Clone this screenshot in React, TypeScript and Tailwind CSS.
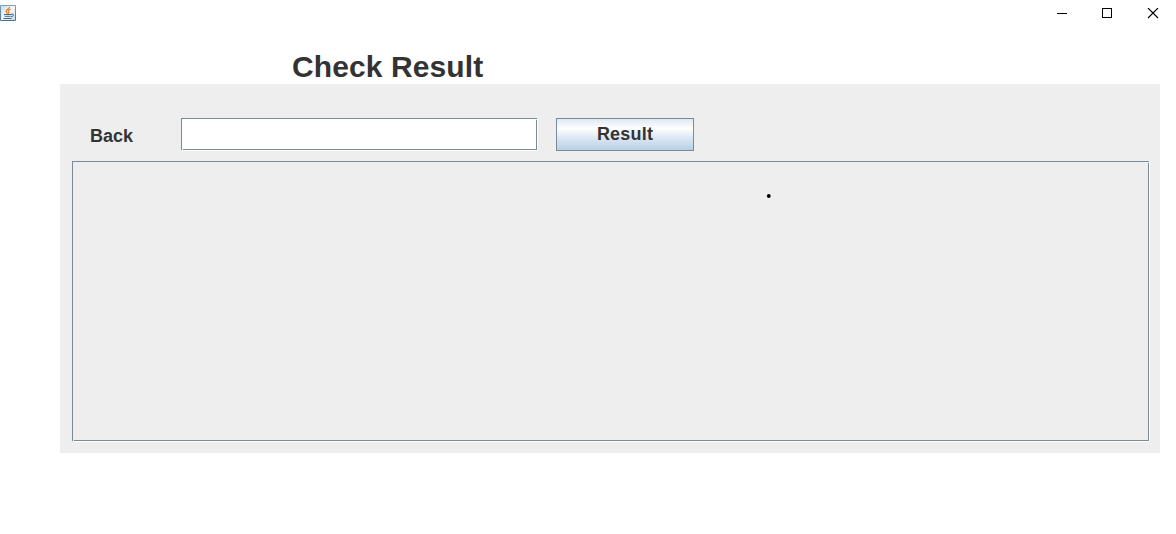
import type { ReactNode } from "react";

function Flush({ className, children }: { className: string; children?: ReactNode }) {
  return (
    <div className={`relative pr-px pb-px ${className}`}>
      <div className="h-full w-full border border-[#7a8a99]">{children}</div>
      <span className="absolute right-0 bottom-0 left-px h-px bg-white" />
      <span className="absolute top-px right-0 bottom-0 w-px bg-white" />
      <span className="absolute bottom-px left-px h-px w-px bg-[#eeeeee]" />
      <span className="absolute top-px right-px h-px w-px bg-[#eeeeee]" />
    </div>
  );
}

function JavaIcon() {
  return (
    <svg width="16" height="16" viewBox="0 0 16 16">
      <defs>
        <linearGradient id="tile" x1="0" y1="0" x2="0" y2="1">
          <stop offset="0" stopColor="#7fa1ba" />
          <stop offset="1" stopColor="#46718f" />
        </linearGradient>
        <linearGradient id="face" x1="0" y1="0" x2="1" y2="1">
          <stop offset="0" stopColor="#c9dbe6" />
          <stop offset="0.5" stopColor="#f6f9fb" />
          <stop offset="1" stopColor="#c5d8e5" />
        </linearGradient>
      </defs>
      <rect width="16" height="16" rx="1.2" fill="url(#tile)" />
      <rect x="1" y="1" width="14" height="14" fill="url(#face)" />
      <path d="M9.5 1.8C9.8 4 6 4.6 6.1 6.3C6.2 7.2 7.2 7.7 7.4 8.8M10.7 4C8 5.2 8.1 6 8.6 6.7C9.1 7.5 8.8 8 8.4 8.8" fill="none" stroke="#f08223" strokeWidth="1.3" />
      <path d="M4 9.5H11.5M4.6 11.3H10.6M3.4 13.5H11.5M11 9.3C14.3 8.5 14.3 11.2 11 11.8" fill="none" stroke="#3c688c" strokeWidth="1" />
    </svg>
  );
}

export default function App() {
  return (
    <div className="h-[534px] w-[1176px] overflow-hidden bg-white font-['Liberation_Sans',Arial,sans-serif] font-bold text-[#333333]">
      <header className="flex h-[26px] w-[1160px] justify-between">
        <div className="pt-[5px]">
          <JavaIcon />
        </div>
        <div className="flex pt-2">
          <svg width="103" height="11" viewBox="0 0 103 11" fill="none" stroke="#000" shapeRendering="crispEdges">
            <path d="M0 5.5H10M45.5 0.5H54.5V9.5H45.5Z" />
            <path d="M91 0L101 10M101 0L91 10" shapeRendering="auto" strokeWidth="1.1" />
          </svg>
        </div>
      </header>
      <h1 className="h-[58px] pt-[23px] pl-[292px] text-[30px] leading-[35px] tracking-[0.1px]">Check Result</h1>
      <main className="ml-[60px] h-[369px] w-[1100px] bg-[#eeeeee] pt-[34px] pl-3">
        <div className="flex h-[43px] items-start">
          <label className="w-[109px] pt-[8px] pl-[18px] text-[18px] leading-[21px]">Back</label>
          <Flush className="h-[33px] w-[357px]">
            <input className="block h-full w-full bg-white px-1 text-[18px] outline-none" />
          </Flush>
          <button className="ml-[18px] h-[33px] w-[138px] border border-[#7a8a99] bg-[linear-gradient(to_bottom,#dde8f3_0%,#ffffff_30%,#dde8f3_60%,#b8cfe5_100%)] text-[18px] leading-[21px] tracking-[0.2px]">
            Result
          </button>
        </div>
        <Flush className="h-[281px] w-[1078px]">
          <svg className="mt-[31px] ml-[693px]" width="6" height="6" viewBox="0 0 6 6">
            <circle cx="2.8" cy="3" r="1.9" fill="#000" />
          </svg>
        </Flush>
      </main>
    </div>
  );
}
